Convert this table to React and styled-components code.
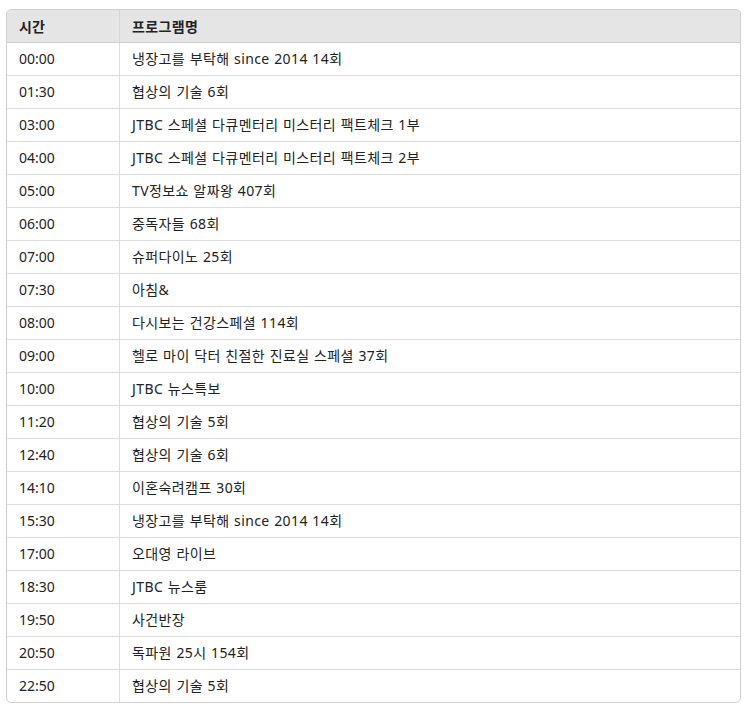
import React from "react";
import styled, { createGlobalStyle } from "styled-components";

const GlobalStyle = createGlobalStyle`
  html, body {
    margin: 0;
    padding: 0;
    background: #ffffff;
  }
  body {
    font-family: "Noto Sans", "Noto Sans CJK KR", sans-serif;
    color: #222;
  }
`;

const Page = styled.div`
  padding: 9px 7px 0 6px;
`;

const TableWrap = styled.div`
  border: 1px solid #cfcfcf;
  border-radius: 5px;
  overflow: hidden;
`;

const Table = styled.table`
  width: 100%;
  border-collapse: collapse;
  font-size: 14px;
`;

const HeadCell = styled.th`
  background: #e5e5e5;
  text-align: left;
  font-weight: 700;
  height: 32px;
  padding: 0 12px;
  border-bottom: 1px solid #cfcfcf;
  border-left: ${(p) => (p.first ? "none" : "1px solid #d6d6d6")};
  width: ${(p) => (p.first ? "88px" : "auto")};
  letter-spacing: ${(p) => (p.first ? "0" : "0.4px")};
  color: #222;
`;

const Row = styled.tr`
  &:not(:last-child) td {
    border-bottom: 1px solid #dcdcdc;
  }
`;

const Cell = styled.td`
  height: 32px;
  padding: 0 12px;
  border-left: ${(p) => (p.first ? "none" : "1px solid #dcdcdc")};
  letter-spacing: ${(p) => (p.first ? "0" : "0.4px")};
  word-spacing: ${(p) => (p.first ? "0" : "0.5px")};
  color: #222;
  line-height: 1;
`;

const schedule = [
  ["00:00", "냉장고를 부탁해 since 2014 14회"],
  ["01:30", "협상의 기술 6회"],
  ["03:00", "JTBC 스페셜 다큐멘터리 미스터리 팩트체크 1부"],
  ["04:00", "JTBC 스페셜 다큐멘터리 미스터리 팩트체크 2부"],
  ["05:00", "TV정보쇼 알짜왕 407회"],
  ["06:00", "중독자들 68회"],
  ["07:00", "슈퍼다이노 25회"],
  ["07:30", "아침&"],
  ["08:00", "다시보는 건강스페셜 114회"],
  ["09:00", "헬로 마이 닥터 친절한 진료실 스페셜 37회"],
  ["10:00", "JTBC 뉴스특보"],
  ["11:20", "협상의 기술 5회"],
  ["12:40", "협상의 기술 6회"],
  ["14:10", "이혼숙려캠프 30회"],
  ["15:30", "냉장고를 부탁해 since 2014 14회"],
  ["17:00", "오대영 라이브"],
  ["18:30", "JTBC 뉴스룸"],
  ["19:50", "사건반장"],
  ["20:50", "독파원 25시 154회"],
  ["22:50", "협상의 기술 5회"],
];

export default function App() {
  return (
    <Page>
      <GlobalStyle />
      <TableWrap>
        <Table>
          <thead>
            <tr>
              <HeadCell first>시간</HeadCell>
              <HeadCell>프로그램명</HeadCell>
            </tr>
          </thead>
          <tbody>
            {schedule.map(([time, title], i) => (
              <Row key={i}>
                <Cell first>{time}</Cell>
                <Cell>{title}</Cell>
              </Row>
            ))}
          </tbody>
        </Table>
      </TableWrap>
    </Page>
  );
}
